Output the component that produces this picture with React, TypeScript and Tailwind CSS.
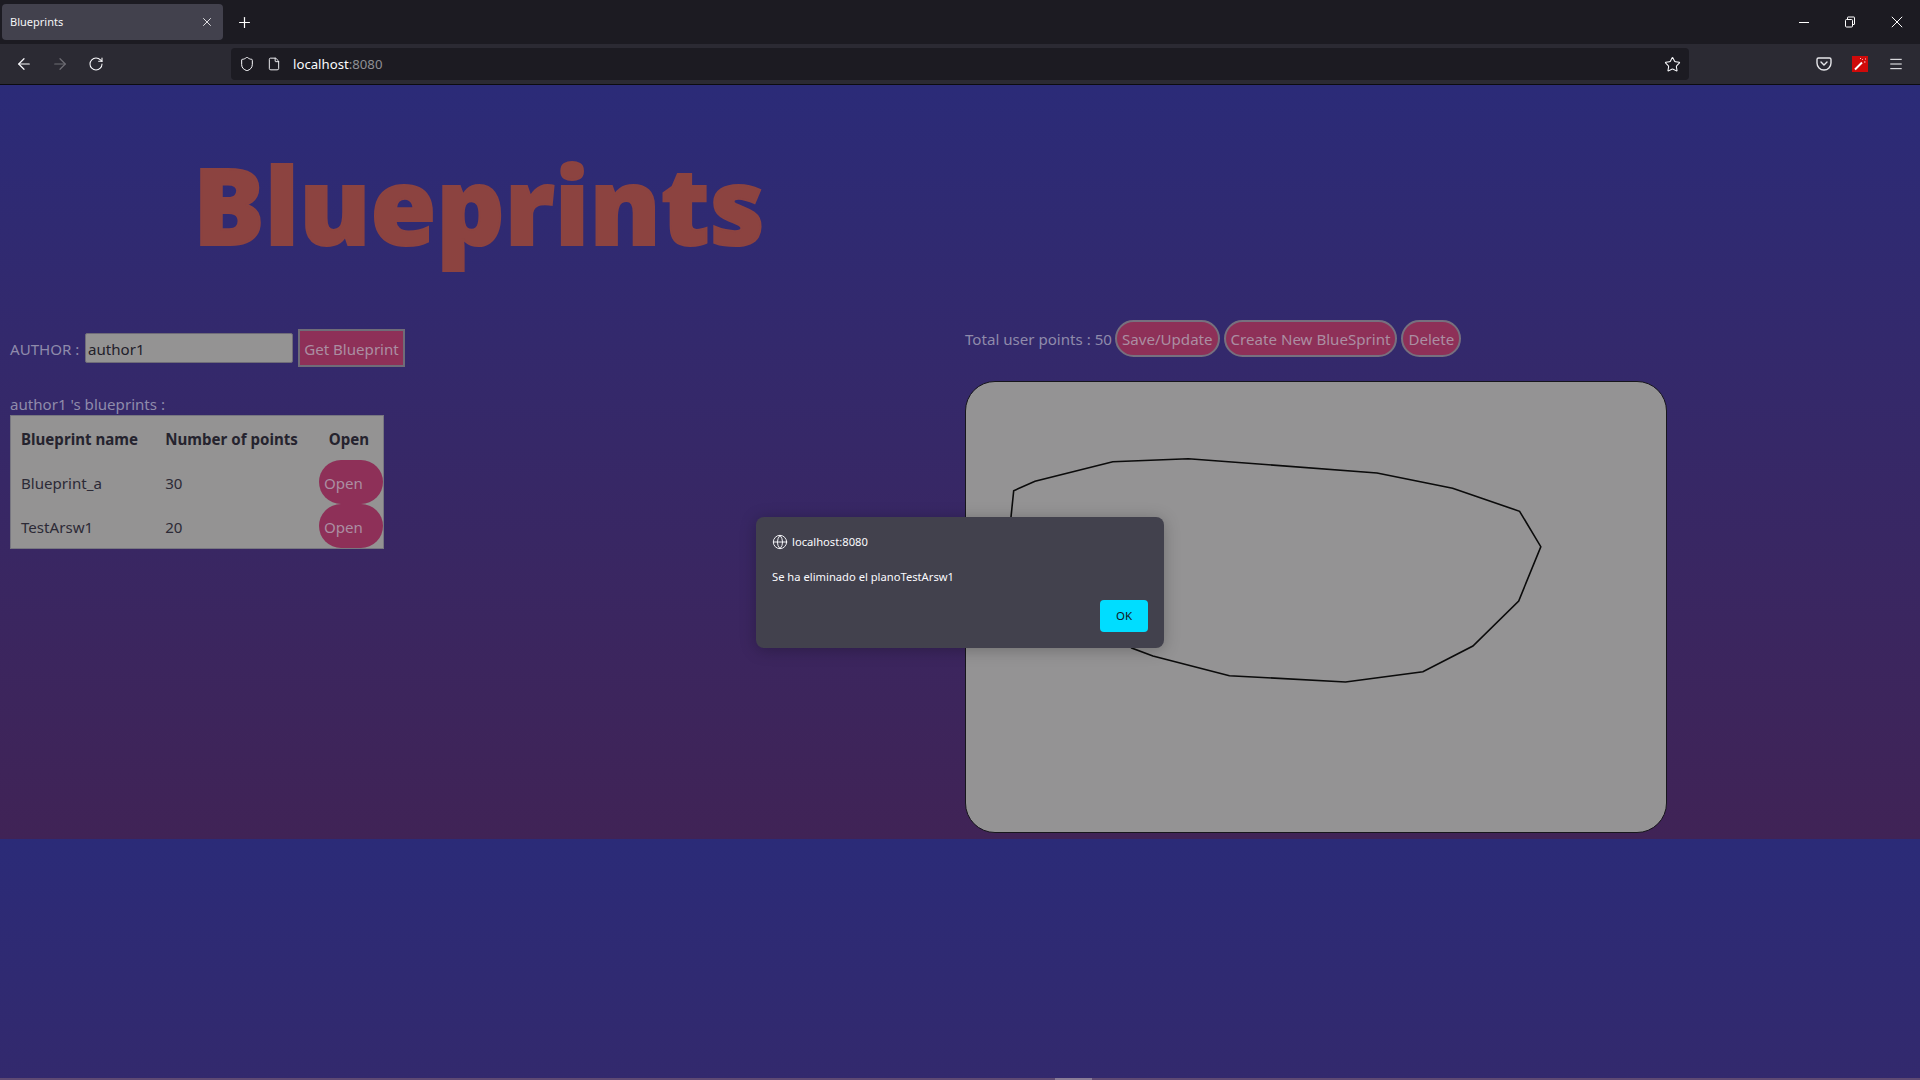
import { ArrowLeft, ArrowRight, RotateCw, Shield, File, Star, Menu, Globe, X, Plus } from "lucide-react";

const pts = "1011,517 1013.7,490.7 1035,481.3 1112.8,461.7 1188.3,458.7 1377,473 1452.6,488.3 1519.6,511.3 1540.8,546.7 1518.7,601 1472.9,646 1422.9,671.7 1345.5,682 1229.4,675.7 1152.9,656 1131.7,648";

function PillButton({ children }: { children: string }) {
  return (
    <button className="h-[37px] whitespace-nowrap rounded-[19px] border-2 border-[#77707f] bg-[#8e3058] px-[5px] pt-[1px] text-[15.1px] text-[#ab8ea2]">
      {children}
    </button>
  );
}

function Row({ name, points }: { name: string; points: string }) {
  return (
    <tr className="h-[44px]">
      <td className="pl-[10px] pt-[3px] text-[15.1px] text-[#2c2a36]">{name}</td>
      <td className="pl-[13px] pt-[3px] text-[15.1px] text-[#2c2a36]">{points}</td>
      <td className="p-0 pl-[10px]">
        <div className="flex h-[44px] w-[64px] items-center rounded-[30px] bg-[#8e3058] pl-[5px] pt-[3px] text-[15.1px] text-[#ab8ea2]">Open</div>
      </td>
    </tr>
  );
}

export default function App() {
  return (
    <div className="relative flex h-[1080px] w-[1920px] flex-col overflow-hidden font-['Noto_Sans',sans-serif]">
      <header className="flex h-[44px] shrink-0 items-center bg-[#1c1b22] pl-[2px] text-white">
        <div className="flex h-[36px] w-[221px] items-center justify-between rounded-[4px] bg-[#42414d] pl-[8px] pr-[9px] text-[11px] text-[#f5f5f7]">
          <span>Blueprints</span>
          <X size={14} strokeWidth={1.5} />
        </div>
        <Plus size={17} strokeWidth={1.7} className="ml-[13px]" />
        <div className="ml-auto flex items-center pr-[17px]">
          <svg width="12" height="12" viewBox="0 0 12 12" className="mr-[34px]"><path d="M1 6.5h10" stroke="#fff" /></svg>
          <svg width="12" height="12" viewBox="0 0 12 12" className="mr-[35px]" fill="none" stroke="#fff"><rect x="1.5" y="3.5" width="7" height="7.5" rx="1" /><path d="M3.5 3V1.5a.5.5 0 0 1 .5-.5h6a.5.5 0 0 1 .5.5V8a.5.5 0 0 1-.5.5H9" /></svg>
          <svg width="12" height="12" viewBox="0 0 12 12"><path d="M.8.8l10.4 10.4M11.2.8.8 11.2" stroke="#fff" /></svg>
        </div>
      </header>
      <nav className="flex h-[41px] shrink-0 items-start border-b border-[#0c0c0f] bg-[#2b2a33] pt-[4px] text-[#fbfbfe]">
        <div className="flex h-[32px] w-[231px] items-center">
          <ArrowLeft size={18} strokeWidth={1.6} className="ml-[15px]" />
          <ArrowRight size={18} strokeWidth={1.6} className="ml-[18px] text-[#6f6e75]" />
          <RotateCw size={16} strokeWidth={1.6} className="ml-[19px]" />
        </div>
        <div className="flex h-[32px] w-[1458px] items-center rounded-[4px] bg-[#1c1b22] pl-[8px] pr-[8px] text-[13.2px]">
          <Shield size={16} strokeWidth={1.5} />
          <File size={14} strokeWidth={1.6} className="ml-[12px]" />
          <span className="ml-[12px] pt-[1px]">localhost<span className="text-[#8f8f94]">:8080</span></span>
          <Star size={17} strokeWidth={1.5} className="ml-auto" />
        </div>
        <div className="flex h-[32px] flex-1 items-center pl-[127px] pr-[16px]">
          <svg width="16" height="14" viewBox="0 0 16 14" fill="none" stroke="#e6e6ea" strokeWidth="1.4"><path d="M1 2.5A1.5 1.5 0 0 1 2.5 1h11A1.5 1.5 0 0 1 15 2.5V6a7 7 0 0 1-14 0z" /><path d="M5 5l3 3 3-3" strokeLinecap="round" /></svg>
          <svg width="16" height="16" viewBox="0 0 16 16" className="ml-[20px]"><rect width="16" height="16" fill="#cf0a0a" /><path d="M3 13.5 10 6.5" stroke="#fff" strokeWidth="2" /><path d="M10 3l.8.8M13 3h1M12 6h1.5M8 2.5h1" stroke="#f7d0d0" /></svg>
          <Menu size={16} strokeWidth={1.5} className="ml-auto" />
        </div>
      </nav>
      <main className="flex-1 bg-gradient-to-b from-[#2b2b78] to-[#402356] bg-[size:100%_754px] bg-repeat-y">
        <h1 className="h-[235px] pl-[193px] pt-[46px] text-[106.5px] font-black leading-[146px] text-[#8c4340] [-webkit-text-stroke:2px_#8c4340]">Blueprints</h1>
        <div className="flex">
          <section className="w-[965px] pl-[10px] pt-[9px]">
            <div className="flex h-[38px] items-center text-[15.1px] text-[#8f8bab]">
              <span className="w-[75px] pt-[3px]">AUTHOR :</span>
              <input readOnly value="author1" className="h-[30px] w-[208px] rounded-[2px] border border-[#6f6c78] bg-[#949393] px-[2px] pt-[2px] text-[15.1px] text-[#22202a] outline-none" />
              <button className="ml-[5px] h-[38px] w-[107px] whitespace-nowrap border-2 border-[#6f6c78] bg-[#8e3058] pt-[2px] text-[15.1px] text-[#ab8ea2]">Get Blueprint</button>
            </div>
            <p className="mt-[27px] h-[21px] text-[15.1px] leading-[21px] text-[#8f8bab]">author1 's blueprints :</p>
            <table className="w-[374px] border-separate border-spacing-0 border border-[#777680] bg-[#949393]">
              <thead>
                <tr className="h-[44px] text-[15.1px] font-bold text-[#25232e]">
                  <th className="w-[145px] pl-[10px] pt-[3px] text-left">Blueprint name</th>
                  <th className="w-[163px] pl-[13px] pt-[3px] text-left">Number of points</th>
                  <th className="pl-[6px] pt-[3px] text-center">Open</th>
                </tr>
              </thead>
              <tbody>
                <Row name="Blueprint_a" points="30" />
                <Row name="TestArsw1" points="20" />
              </tbody>
            </table>
          </section>
          <section>
            <div className="flex h-[37px] items-center gap-[4px] whitespace-nowrap text-[15.1px] text-[#8f8bab]">
              <span className="mr-px w-[145px] pt-[1px]">Total user points : 50</span>
              <PillButton>Save/Update</PillButton>
              <PillButton>Create New BlueSprint</PillButton>
              <PillButton>Delete</PillButton>
            </div>
            <div className="mt-[24px] h-[452px] w-[702px] overflow-hidden rounded-[30px] border border-[#17161c] bg-[#949394]">
              <svg width="700" height="450" viewBox="966 382 700 450">
                <polygon points={pts} fill="none" stroke="#0b0b0b" strokeWidth="1.6" />
              </svg>
            </div>
          </section>
        </div>
      </main>
      <div className="absolute bottom-0 left-0 h-[2px] w-full bg-[#5f4a73]">
        <div className="ml-[1055px] h-[2px] w-[37px] bg-[#8a7c96]" />
      </div>
      <div className="absolute left-[756px] top-[517px] h-[131px] w-[408px] rounded-[8px] bg-[#42414d] text-[11.2px] text-[#fbfbfe] shadow-[0_2px_16px_rgba(0,0,0,0.25)]">
        <div className="ml-[16px] mt-[16px] flex h-[18px] items-center gap-[4px]">
          <Globe size={16} strokeWidth={1.4} />
          <span>localhost:8080</span>
        </div>
        <p className="ml-[16px] mt-[17px] h-[18px] leading-[18px]">Se ha eliminado el planoTestArsw1</p>
        <button className="absolute right-[16px] top-[83px] h-[32px] w-[48px] rounded-[4px] bg-[#00ddff] text-[11.5px] text-[#15141a]">OK</button>
      </div>
    </div>
  );
}
